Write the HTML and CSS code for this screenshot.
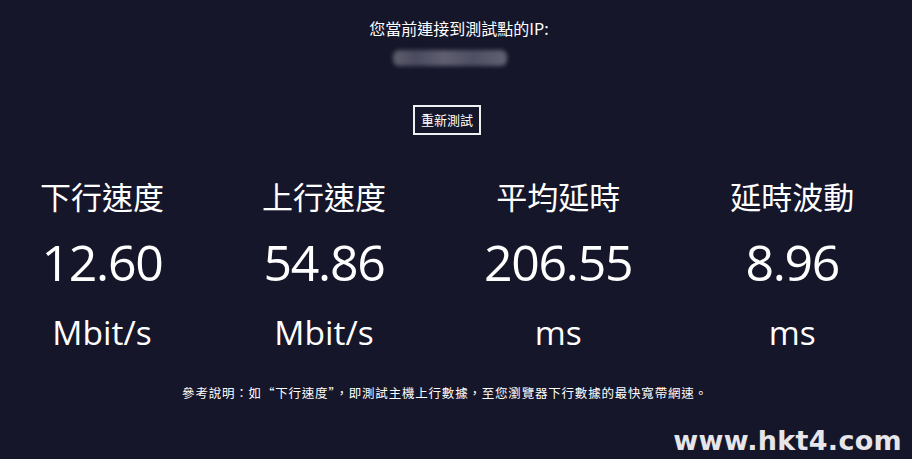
FILE: index.html
```html
<!DOCTYPE html>
<html lang="zh-Hant">
<head>
<meta charset="utf-8">
<link rel="stylesheet" href="styles.css">
</head>
<body>
<div class="page">
  <div class="ip-label">您當前連接到測試點的IP:</div>
  <div class="ip-blur"></div>
  <button class="retest">重新測試</button>
  <div class="stats">
    <div class="stat">
      <div class="stat-title">下行速度</div>
      <div class="stat-value">12.60</div>
      <div class="stat-unit">Mbit/s</div>
    </div>
    <div class="stat">
      <div class="stat-title">上行速度</div>
      <div class="stat-value">54.86</div>
      <div class="stat-unit">Mbit/s</div>
    </div>
    <div class="stat">
      <div class="stat-title">平均延時</div>
      <div class="stat-value">206.55</div>
      <div class="stat-unit">ms</div>
    </div>
    <div class="stat">
      <div class="stat-title">延時波動</div>
      <div class="stat-value">8.96</div>
      <div class="stat-unit">ms</div>
    </div>
  </div>
  <div class="note">參考說明：如“下行速度”，即測試主機上行數據，至您瀏覽器下行數據的最快寬帶網速。</div>
</div>
<div class="watermark">www.hkt4.com</div>
</body>
</html>
```
FILE: styles.css
```css
html, body {
  margin: 0;
  padding: 0;
  background: #16162a;
  height: 100%;
  overflow: hidden;
}
body {
  font-family: "Noto Sans CJK TC", "Noto Sans", sans-serif;
  color: #ffffff;
  position: relative;
}
.page {
  display: flex;
  flex-direction: column;
  align-items: center;
  padding-top: 18px;
}
.ip-label {
  font-size: 16px;
  line-height: 20px;
  height: 20px;
  margin-left: 6px;
}
.ip-blur {
  margin-top: 12px;
  margin-left: -12px;
  width: 114px;
  height: 16px;
  border-radius: 6px;
  background: linear-gradient(90deg, #6a6a78 0%, #55556a 20%, #6c6c7c 45%, #5a5a6e 70%, #707082 100%);
  filter: blur(2px);
  opacity: 0.85;
}
.retest {
  margin-top: 39px;
  margin-left: -18px;
  width: 68px;
  height: 30px;
  background: transparent;
  border: 2px solid #f0f0f0;
  color: #ffffff;
  font-family: "Noto Sans CJK TC", sans-serif;
  font-size: 13px;
  padding: 0;
  line-height: 24px;
}
.stats {
  margin-top: 41px;
  align-self: stretch;
  display: flex;
  gap: 98px;
  padding-left: 40px;
}
.stat {
  display: flex;
  flex-direction: column;
  align-items: center;
}
.stat-title {
  font-size: 31px;
  line-height: 40px;
}
.stat-value {
  margin-top: 16px;
  font-family: "Open Sans", sans-serif;
  font-size: 50px;
  line-height: 60px;
  letter-spacing: -1.3px;
}
.stat-unit {
  margin-top: 20px;
  font-family: "Open Sans", sans-serif;
  font-size: 33.5px;
  line-height: 40px;
}
.note {
  margin-top: 32px;
  font-size: 12.5px;
  line-height: 18px;
  letter-spacing: 0.8px;
  margin-left: -22px;
}
.watermark {
  position: absolute;
  right: 10px;
  bottom: 3px;
  font-family: "DejaVu Sans", Verdana, sans-serif;
  font-weight: bold;
  font-size: 27px;
  color: #e6e6ea;
  letter-spacing: 0.3px;
}
```
